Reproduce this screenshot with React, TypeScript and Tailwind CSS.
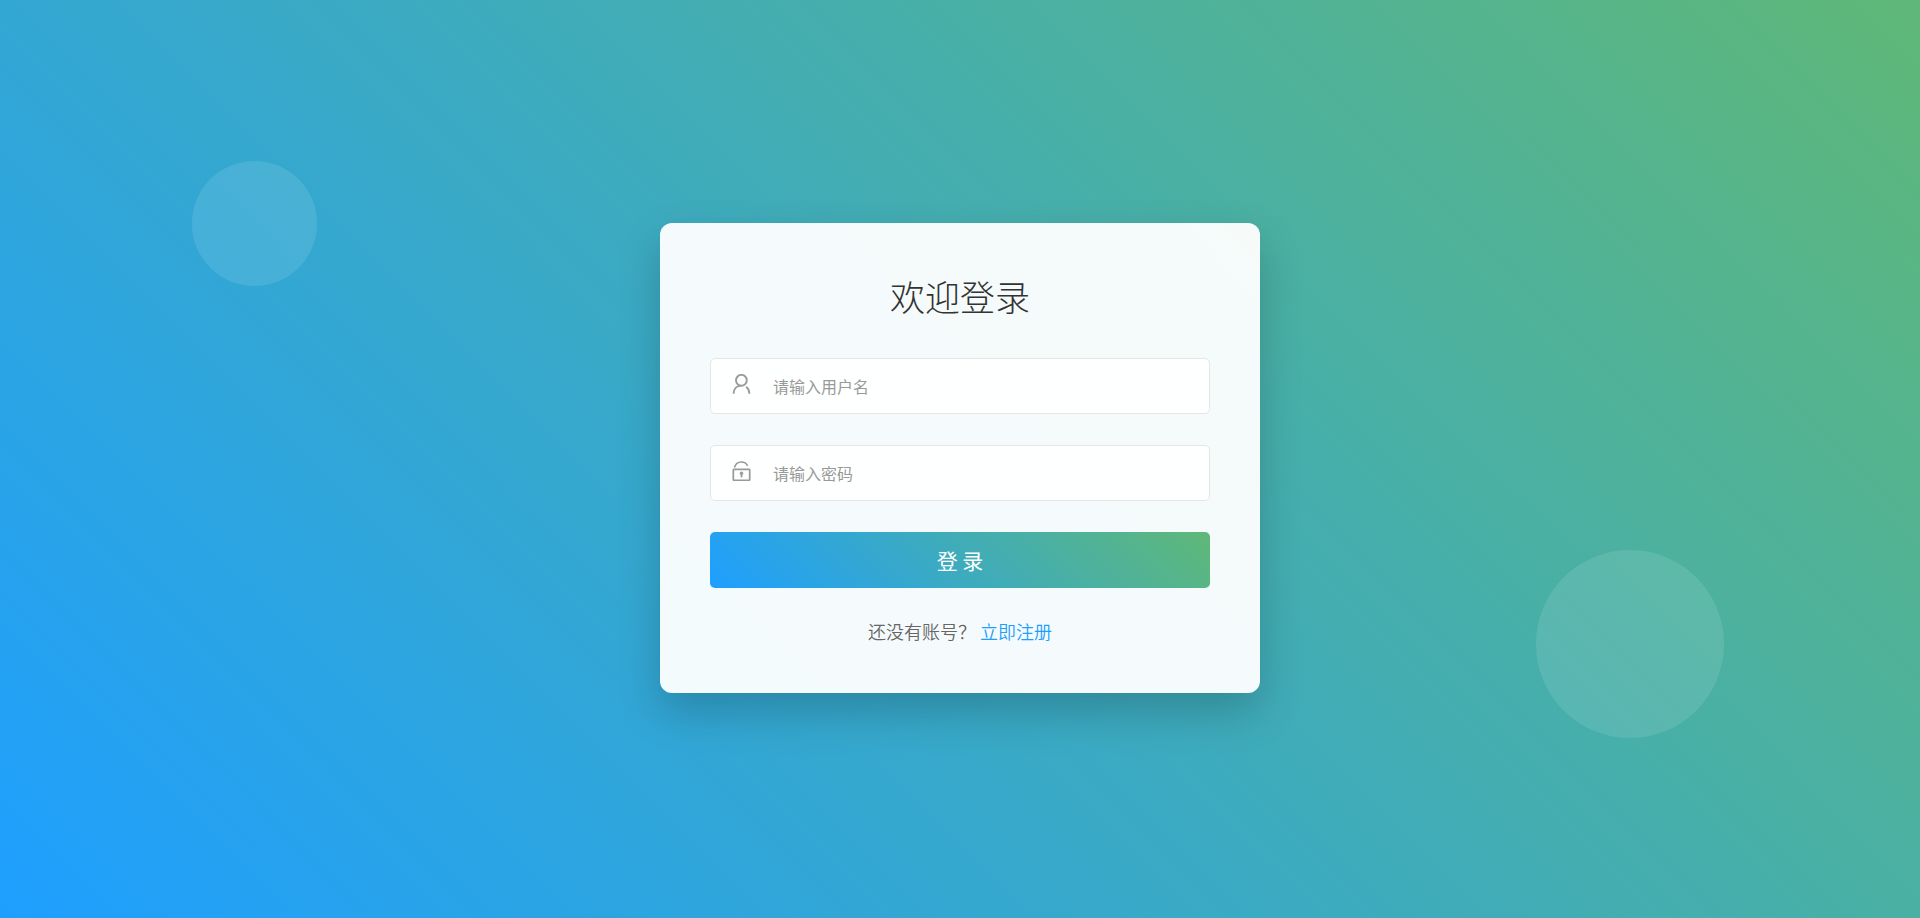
import { useState } from "react";
import type { FormEvent, ReactNode } from "react";

interface FieldProps {
  id: string;
  type: string;
  label: string;
  value: string;
  onChange: (value: string) => void;
  icon: ReactNode;
}

function UserIcon() {
  return (
    <svg viewBox="0 0 20 20" className="w-5 h-5" fill="none" stroke="currentColor" strokeWidth="1.9">
      <circle cx="10.4" cy="6.3" r="5.4" />
      <path d="M9.4 11.6C5.4 12 2.7 15.2 2.6 19.7" />
      <path d="M15.2 12.7C17.2 14.2 18.3 16.6 18.4 19.7" />
    </svg>
  );
}

function LockIcon() {
  return (
    <svg viewBox="0 0 20 20" className="w-5 h-5" fill="none" stroke="currentColor" strokeWidth="1.7">
      <rect x="2.3" y="8.3" width="16.4" height="11" rx="0.6" />
      <path d="M3.5 6.5C4.4 3 7 1 10.3 1C13 1 15.4 2.3 16.6 4.8" />
      <circle cx="10.5" cy="12.3" r="1.7" fill="currentColor" stroke="none" />
      <path d="M10.5 12.5V16.4" />
    </svg>
  );
}

function Field({ id, type, label, value, onChange, icon }: FieldProps) {
  return (
    <div className="flex items-center h-14 rounded-[5px] border border-[#e6e6e6] bg-white/90 focus-within:border-[#1e9fff]">
      <label htmlFor={id} aria-label={label} className="pl-5 pb-1 pr-[22px] text-[#999]">
        {icon}
      </label>
      <input
        id={id}
        name={id}
        type={type}
        placeholder={label}
        value={value}
        onChange={(e) => onChange(e.target.value)}
        className="flex-1 min-w-0 h-full bg-transparent text-base text-[#333] placeholder:text-[#999] outline-none"
      />
    </div>
  );
}

export default function App() {
  const [username, setUsername] = useState("");
  const [password, setPassword] = useState("");

  function handleSubmit(e: FormEvent) {
    e.preventDefault();
  }

  return (
    <div className="relative min-h-screen pb-0.5 flex items-center justify-center overflow-hidden bg-[linear-gradient(45deg,#1e9fff,#5fb878)] font-['Noto_Sans_CJK_SC',sans-serif]">
      {/* Floating circles */}
      <div className="absolute left-[10%] top-[17.5%] w-[125px] h-[125px] rounded-full bg-white/10" />
      <div className="absolute left-[80%] top-[59.9%] w-[188px] h-[188px] rounded-full bg-white/10" />

      {/* Login card */}
      <main className="relative w-full max-w-[600px] p-[50px] rounded-xl bg-white/95 shadow-[0_19px_44px_rgba(0,0,0,0.2)]">
        <h1 className="mb-[39px] text-center text-[35px] leading-[46px] font-light text-[#333]">
          欢迎登录
        </h1>

        <form onSubmit={handleSubmit} className="flex flex-col gap-[31px]">
          <Field
            id="username"
            type="text"
            label="请输入用户名"
            value={username}
            onChange={setUsername}
            icon={<UserIcon />}
          />
          <Field
            id="password"
            type="password"
            label="请输入密码"
            value={password}
            onChange={setPassword}
            icon={<LockIcon />}
          />
          <button
            type="submit"
            className="h-14 pt-0.5 rounded-[5px] bg-[linear-gradient(45deg,#1e9fff,#5fb878)] text-[21px] text-white cursor-pointer"
          >
            登 录
          </button>
        </form>

        <p className="mt-[31px] flex justify-center gap-1 text-lg leading-6 font-[350] text-[#666]">
          还没有账号？
          <a href="#register" className="text-[#1e9fff]">
            立即注册
          </a>
        </p>
      </main>
    </div>
  );
}
